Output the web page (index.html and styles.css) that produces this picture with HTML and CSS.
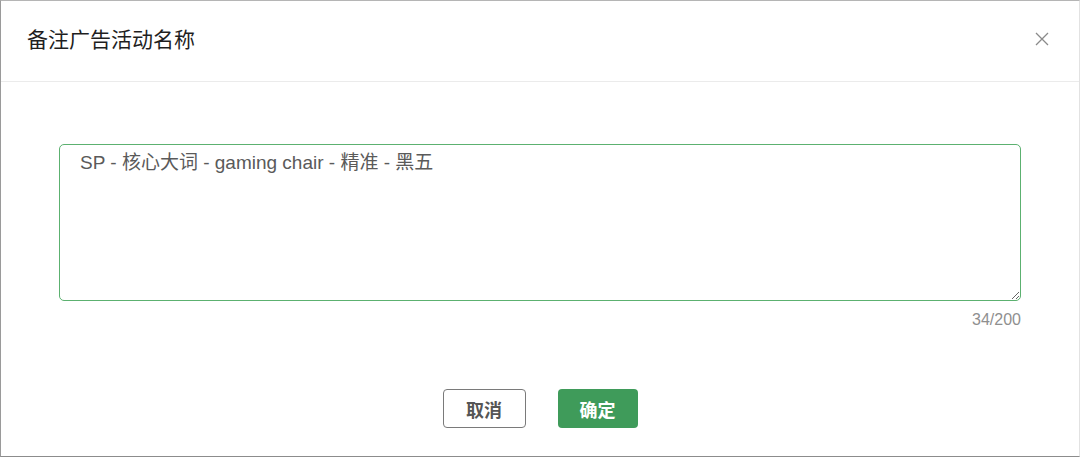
FILE: index.html
```html
<!DOCTYPE html>
<html lang="zh-CN">

<head>
    <meta charset="UTF-8">
    <meta name="viewport" content="width=device-width, initial-scale=1.0">
    <title>备注广告活动名称</title>
    <link rel="stylesheet" href="styles.css">
</head>

<body>
    <div class="dialog">
        <div class="dialog-header">
            <h2>备注广告活动名称</h2>
            <button class="close" aria-label="关闭">
                <svg width="14" height="14" viewBox="0 0 14 14">
                    <path d="M1 1L13 13M13 1L1 13" stroke="#8a8a8a" stroke-width="1.3" fill="none" />
                </svg>
            </button>
        </div>
        <div class="dialog-body">
            <textarea id="remark" maxlength="200" autofocus>SP - 核心大词 - gaming chair - 精准 - 黑五</textarea>
            <div class="counter">34/200</div>
        </div>
        <div class="dialog-footer">
            <button class="btn btn-cancel">取消</button>
            <button class="btn btn-ok">确定</button>
        </div>
    </div>
    <script>
        const remark = document.getElementById('remark');
        remark.focus();
        remark.setSelectionRange(remark.value.length, remark.value.length);
    </script>
</body>

</html>
```

FILE: styles.css
```css
/* Dialog styles */
body {
    margin: 0;
    padding: 0;
    background-color: #fff;
    font-family: "Liberation Sans", "Noto Sans CJK SC", sans-serif;
}

.dialog {
    height: 457px;
    box-sizing: border-box;
    border: 1px solid #b5b5b5;
    border-right-color: #e2e2e2;
    border-bottom-color: #8c8c8c;
    border-left-color: #9a9a9a;
    display: flex;
    flex-direction: column;
}

.dialog-header {
    height: 80px;
    border-bottom: 1px solid #ebebeb;
    display: flex;
    align-items: center;
    justify-content: space-between;
    padding: 0 30px 0 26px;
}

.dialog-header h2 {
    margin: 0 0 5px 0;
    font-size: 21px;
    line-height: 1;
    font-weight: normal;
    color: #1f1f1f;
    font-family: "Noto Sans CJK SC", sans-serif;
}

.close {
    border: none;
    background: none;
    padding: 0;
    margin-bottom: 4px;
    width: 14px;
    height: 14px;
    cursor: pointer;
}

.close svg {
    display: block;
}

.dialog-body {
    padding: 62px 58px 0 58px;
}

textarea {
    display: block;
    width: 100%;
    height: 157px;
    box-sizing: border-box;
    padding: 7px 20px;
    border: 1px solid #5cb170;
    border-radius: 5px;
    outline: none;
    font-family: "Liberation Sans", "Noto Sans CJK SC", sans-serif;
    font-size: 19px;
    line-height: 22px;
    color: #5a5a5a;
    resize: vertical;
}

.counter {
    text-align: right;
    font-size: 16px;
    line-height: 18px;
    color: #8f8f8f;
    margin-top: 10px;
}

.dialog-footer {
    display: flex;
    justify-content: center;
    gap: 32px;
    margin-top: 60px;
}

.btn {
    width: 83px;
    height: 39px;
    border-radius: 4px;
    font-size: 18px;
    font-weight: bold;
    font-family: "Noto Sans CJK SC", sans-serif;
    cursor: pointer;
}

.btn-cancel {
    background-color: #fff;
    border: 1.5px solid #7a7a7a;
    color: #555;
}

.btn-ok {
    width: 80px;
    background-color: #3f9b5a;
    border: none;
    color: #fff;
}

.btn-ok:hover {
    background-color: #36864e;
}
```
